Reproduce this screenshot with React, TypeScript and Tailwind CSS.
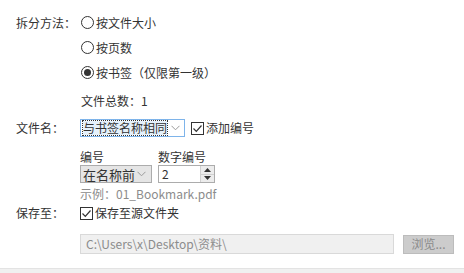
import React from "react";

const font = "font-['Microsoft_YaHei','Noto_Sans_CJK_SC',sans-serif]";

function Radio({ checked, label }: { checked?: boolean; label: string }) {
  return (
    <div className="h-[25px] flex items-center">
      <span className="w-[13px] h-[13px] rounded-full border border-[#333] bg-white flex items-center justify-center ml-px shrink-0">
        {checked && <span className="w-[7px] h-[7px] rounded-full bg-[#333]" />}
      </span>
      <span className="ml-[2px] whitespace-nowrap">{label}</span>
    </div>
  );
}

function Check({ label }: { label: string }) {
  return (
    <div className="flex items-center">
      <span className="w-[13px] h-[13px] border border-[#333] bg-white flex items-center justify-center shrink-0">
        <svg width="11" height="11" viewBox="0 0 11 11">
          <path d="M1.5 5.5 L4.3 8.3 L9.5 2.5" fill="none" stroke="#333" strokeWidth="1.2" />
        </svg>
      </span>
      <span className="ml-[2px] whitespace-nowrap">{label}</span>
    </div>
  );
}

function Chevron() {
  return (
    <svg width="9" height="6" viewBox="0 0 9 6" className="shrink-0">
      <path d="M0.5 0.8 L4.5 4.8 L8.5 0.8" fill="none" stroke="#9a9a9a" strokeWidth="1" />
    </svg>
  );
}

export default function App() {
  return (
    <div className={`w-[464px] h-[273px] bg-white flex flex-col text-[12px] leading-none text-[#333] ${font}`}>
      <div className="flex-1 pl-4 pt-[10px] grid grid-cols-[64px_1fr] content-start">
        <div className="h-[25px] flex items-center whitespace-nowrap">拆分方法：</div>
        <div className="flex flex-col">
          <Radio label="按文件大小" />
          <Radio label="按页数" />
          <Radio checked label="按书签（仅限第一级）" />
          <div className="h-[18px] mt-[7px] flex items-center ml-px whitespace-nowrap">文件总数：1</div>
        </div>

        <div className="h-[18px] mt-[9px] flex items-center whitespace-nowrap">文件名：</div>
        <div className="mt-[9px] flex items-center">
          <div className="w-[105px] h-[18px] border border-[#7eb4ea] bg-white flex items-center justify-between pl-[2px] pr-[4px]">
            <span className="outline-1 outline-dotted outline-[#333] bg-[#e5f1fb] leading-[14px] whitespace-nowrap">与书签名称相同</span>
            <Chevron />
          </div>
          <div className="ml-[6px]">
            <Check label="添加编号" />
          </div>
        </div>

        <div />
        <div className="mt-[12px] flex gap-[6px]">
          <div className="flex flex-col">
            <div className="h-[15px] flex items-center">编号</div>
            <div className="w-[72px] h-[18px] mt-[1px] border border-[#acacac] bg-[#e5e5e5] flex items-center justify-between pl-[2px] pr-[5px] text-[13px]">
              <span className="whitespace-nowrap">在名称前</span>
              <Chevron />
            </div>
          </div>
          <div className="flex flex-col">
            <div className="h-[15px] flex items-center whitespace-nowrap">数字编号</div>
            <div className="w-[57px] h-[18px] mt-[1px] border border-[#acacac] bg-white flex items-stretch justify-between">
              <span className="pl-[3px] flex items-center">2</span>
              <div className="w-[14px] flex flex-col border-l border-[#d0d0d0]">
                <div className="flex-1 bg-[#ececec] border-b border-[#d0d0d0] flex items-center justify-center">
                  <svg width="7" height="4" viewBox="0 0 7 4"><path d="M0 4 L3.5 0 L7 4 Z" fill="#333" /></svg>
                </div>
                <div className="flex-1 bg-[#ececec] flex items-center justify-center">
                  <svg width="7" height="4" viewBox="0 0 7 4"><path d="M0 0 L3.5 4 L7 0 Z" fill="#333" /></svg>
                </div>
              </div>
            </div>
          </div>
        </div>

        <div />
        <div className="h-[14px] mt-[4px] flex items-center text-[#8c8c8c] whitespace-nowrap">示例：01_Bookmark.pdf</div>

        <div className="h-[16px] mt-[4px] flex items-center whitespace-nowrap">保存至：</div>
        <div className="h-[16px] mt-[4px] flex items-center">
          <Check label="保存至源文件夹" />
        </div>

        <div />
        <div className="mt-[13px] flex items-center">
          <div className="w-[314px] h-[20px] border border-[#d9d9d9] bg-[#f0f0f0] flex items-center pl-[5px] text-[#8c8c8c] whitespace-nowrap">
            C:\Users\x\Desktop\资料\
          </div>
          <div className="ml-[9px] w-[51px] h-[19px] border border-[#bcbcbc] bg-[#cccccc] flex items-center justify-center text-[#8a8a8a] whitespace-nowrap">
            浏览...
          </div>
        </div>
      </div>
      <div className="h-[5px] bg-[#f0f0f0] border-t border-[#e3e3e3]" />
    </div>
  );
}
